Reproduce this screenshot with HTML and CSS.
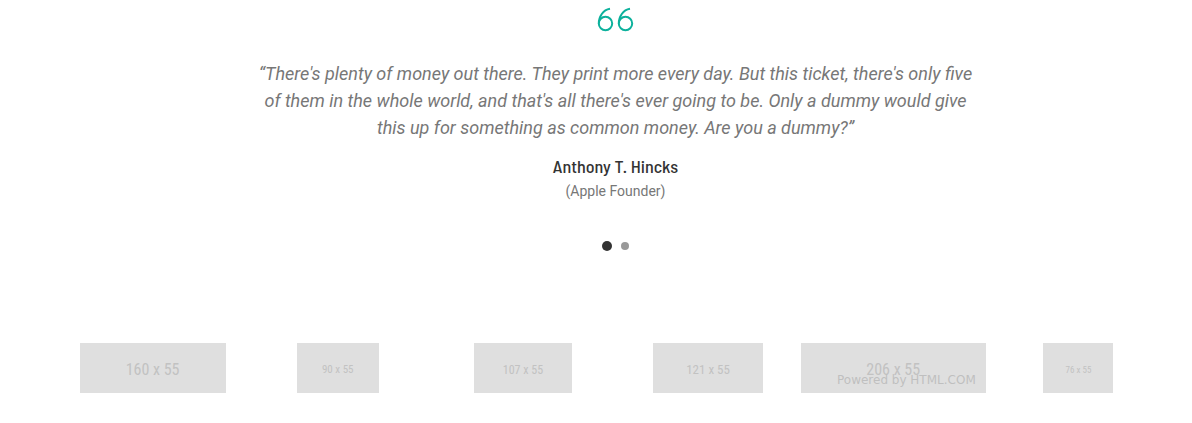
FILE: index.html
```html
<!DOCTYPE html>
<html lang="en">
<head>
<meta charset="utf-8">
<meta name="viewport" content="width=device-width, initial-scale=1">
<title>Testimonials</title>
<link rel="stylesheet" href="styles.css">
</head>
<body>
<main class="page">
  <section class="testimonial">
    <svg class="quote-icon" viewBox="0 0 36 24" aria-hidden="true">
      <circle cx="7.5" cy="15.5" r="6.7"/>
      <path d="M.8 15.5C.8 8.5 5 2 12 .8"/>
      <circle cx="27.5" cy="15.5" r="6.7"/>
      <path d="M20.8 15.5C20.8 8.5 25 2 32 .8"/>
    </svg>
    <blockquote class="quote">“There's plenty of money out there. They print more every day. But this ticket, there's only five of them in the whole world, and that's all there's ever going to be. Only a dummy would give this up for something as common money. Are you a dummy?”</blockquote>
    <h4 class="author">Anthony T. Hincks</h4>
    <p class="role">(Apple Founder)</p>
    <div class="dots">
      <button class="dot dot-active" type="button" aria-label="Testimonial 1"></button>
      <button class="dot" type="button" aria-label="Testimonial 2"></button>
    </div>
  </section>
  <section class="brands">
    <div class="brand brand-160">160 x 55</div>
    <div class="brand brand-90">90 x 55</div>
    <div class="brand brand-107">107 x 55</div>
    <div class="brand brand-121">121 x 55</div>
    <div class="brand brand-206">206 x 55<span class="powered">Powered by HTML.COM</span></div>
    <div class="brand brand-76">76 x 55</div>
  </section>
</main>
</body>
</html>
```
FILE: styles.css
```css
body {
  margin: 0;
  background: #fff;
  color: #777;
  font-family: Roboto, sans-serif;
}
.page {
  padding: 8px 21px 30px 60px;
}
.testimonial {
  display: flex;
  flex-direction: column;
  align-items: center;
  text-align: center;
}
.quote-icon {
  width: 36px;
  height: 24px;
  overflow: visible;
  fill: none;
  stroke: #0cb19c;
  stroke-width: 2;
}
.quote {
  max-width: 730px;
  margin: 28px 0 0;
  font-size: 18px;
  font-style: italic;
  line-height: 27px;
}
.author {
  margin: 13px 0 0;
  color: #333;
  font-family: "Barlow Semi Condensed", "Roboto Condensed", Barlow, Roboto, sans-serif;
  font-size: 18px;
  font-weight: 500;
  line-height: 24px;
}
.role {
  margin: 1px 0 0;
  font-size: 14px;
  line-height: 24px;
}
.dots {
  display: flex;
  align-items: center;
  gap: 9px;
  height: 10px;
  margin-top: 38px;
}
.dot {
  width: 8px;
  height: 8px;
  padding: 0;
  border: 0;
  border-radius: 50%;
  background: #999;
}
.dot-active {
  width: 10px;
  height: 10px;
  background: #333;
}
.brands {
  display: grid;
  grid-template-columns: repeat(6, 1fr);
  justify-items: center;
  margin-top: 92px;
}
.brand {
  box-sizing: border-box;
  position: relative;
  display: flex;
  align-items: center;
  justify-content: center;
  height: 50px;
  padding-top: 4px;
  background: #dfdfdf;
  color: #c2c2c2;
  font-family: "Roboto Condensed", "Barlow Semi Condensed", "Liberation Sans", sans-serif;
  line-height: 20px;
}
.brand-160 { width: 146px; font-size: 16px; }
.brand-90 { width: 82px; font-size: 11px; }
.brand-107 { width: 98px; font-size: 12px; }
.brand-121 { width: 110px; font-size: 13px; }
.brand-206 { width: 185px; font-size: 16px; }
.brand-76 { width: 70px; font-size: 9px; }
.powered {
  position: absolute;
  right: 10px;
  bottom: 6px;
  color: #bfbfbf;
  font-family: "DejaVu Sans", sans-serif;
  font-size: 12px;
  line-height: 14px;
  white-space: nowrap;
}
```
